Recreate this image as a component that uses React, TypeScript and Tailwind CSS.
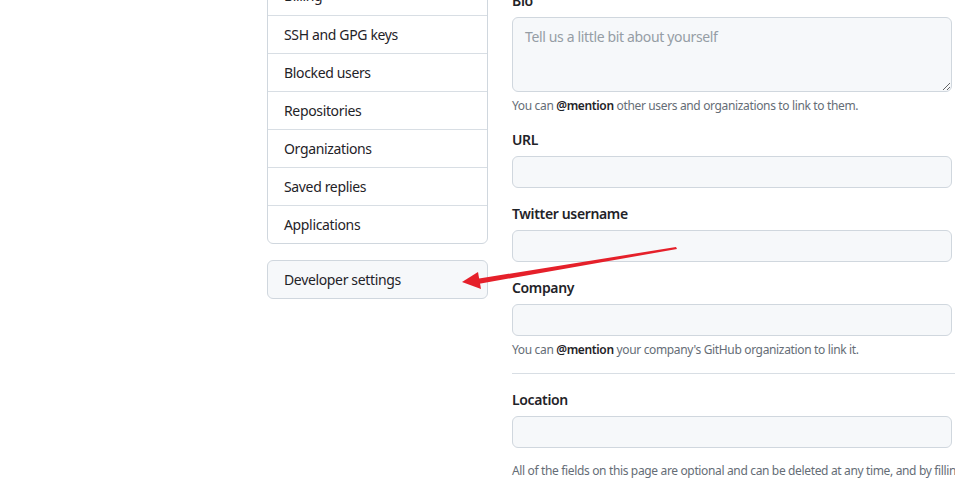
import React from 'react'

const menuItems = ['Billing', 'SSH and GPG keys', 'Blocked users', 'Repositories', 'Organizations', 'Saved replies', 'Applications']

function Label({ children }: { children: React.ReactNode }) {
  return <label className="block h-5 leading-5 text-sm font-semibold text-[#1f2328] mb-[6px]">{children}</label>
}

function Input() {
  return <input type="text" className="block w-[440px] h-8 rounded-md border border-[#d0d7de] bg-[#f6f8fa] px-3 text-sm outline-none" />
}

function Hint({ children }: { children: React.ReactNode }) {
  return <p className="mt-[5px] text-xs leading-[18px] text-[#656d76]">{children}</p>
}

export default function App() {
  return (
    <div
      className="relative w-[955px] h-[481px] overflow-hidden bg-white tracking-[-0.35px]"
      style={{ fontFamily: '"Noto Sans", "Liberation Sans", sans-serif' }}
    >
      <div className="flex pl-[267px] gap-6">
        {/* Sidebar */}
        <div className="w-[221px] shrink-0 mt-[-24px]">
          <nav className="rounded-md border border-[#d0d7de] overflow-hidden">
            {menuItems.map((item, i) => (
              <div
                key={item}
                className={`h-[38px] flex items-center px-4 text-sm text-[#1f2328] ${i > 0 ? 'border-t border-[#d8dee4]' : ''}`}
              >
                {item}
              </div>
            ))}
          </nav>
          <div className="mt-4 h-[39px] flex items-center px-4 rounded-md border border-[#d0d7de] bg-[#f6f8fa] text-sm text-[#1f2328]">
            Developer settings
          </div>
        </div>

        {/* Main form */}
        <div className="w-[700px] shrink-0 mt-[-9px]">
          <Label>Bio</Label>
          <textarea
            placeholder="Tell us a little bit about yourself"
            className="block w-[440px] h-[75px] rounded-md border border-[#d0d7de] bg-[#f6f8fa] px-3 pt-[9px] text-sm leading-5 outline-none placeholder:text-[#959da5]"
          />
          <Hint>
            You can <span className="font-semibold text-[#1f2328]">@mention</span> other users and organizations to link to them.
          </Hint>

          <div className="mt-[15px]">
            <Label>URL</Label>
            <Input />
          </div>

          <div className="mt-4">
            <Label>Twitter username</Label>
            <Input />
          </div>

          <div className="mt-4">
            <Label>Company</Label>
            <Input />
            <Hint>
              You can <span className="font-semibold text-[#1f2328]">@mention</span> your company's GitHub organization to link it.
            </Hint>
          </div>

          <hr className="mt-[14px] border-0 border-t border-[#d8dee4]" />

          <div className="mt-4">
            <Label>Location</Label>
            <Input />
          </div>

          <p className="mt-[14px] text-xs leading-[18px] text-[#656d76] whitespace-nowrap">
            All of the fields on this page are optional and can be deleted at any time, and by filling them out, you're giving us consent to share this data wherever your user profile appears.
          </p>
        </div>
      </div>

      {/* annotation arrow */}
      <svg className="absolute left-0 top-0 pointer-events-none" width="955" height="481">
        <polygon points="676,247 677,249 478,284 476,279" fill="#e5202a" />
        <polygon points="462,282 478,272 481,289" fill="#e5202a" />
      </svg>
    </div>
  )
}
